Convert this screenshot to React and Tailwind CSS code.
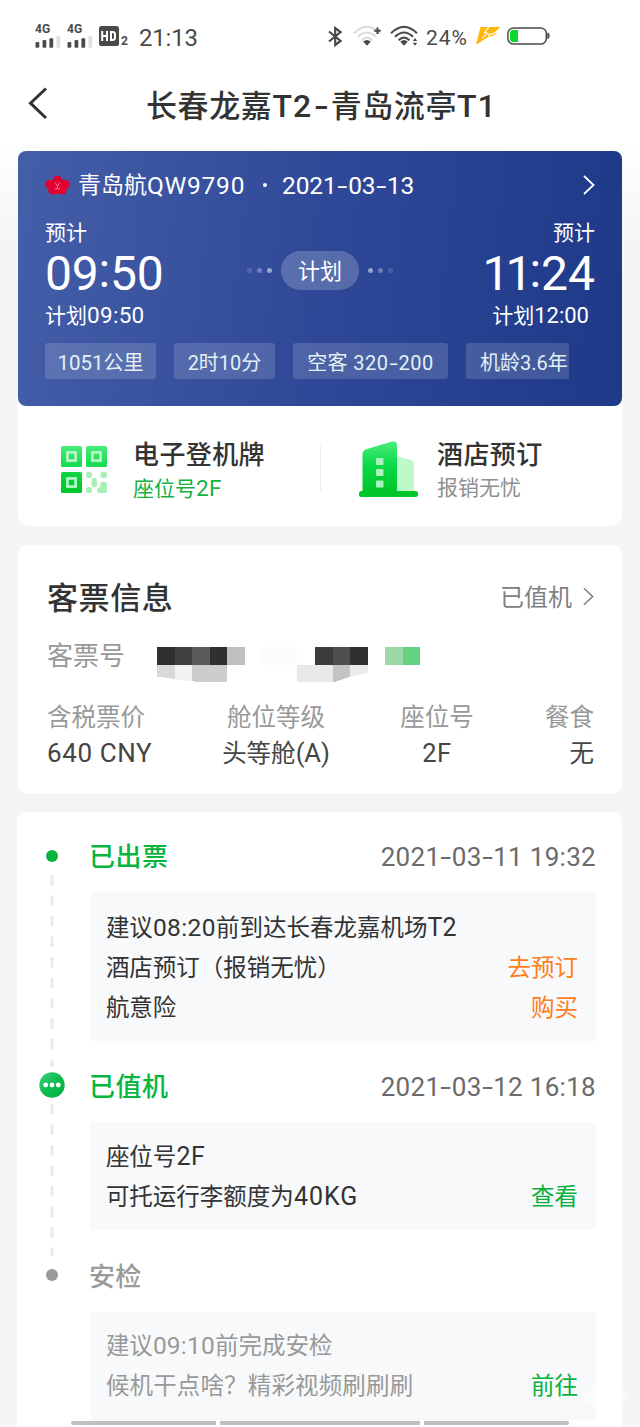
import React from "react";

const Chevron = ({ className, width = 2 }) => (
  <svg className={className} viewBox="0 0 12 20" fill="none" stroke="currentColor" strokeWidth={width}>
    <path d="M1 1 L10.5 10 L1 19" />
  </svg>
);

const Signal = () => (
  <div className="flex w-[26px] flex-col">
    <span className="h-[10px] text-[12px] leading-[9px] font-bold text-[#4a4a4a]">4G</span>
    <svg className="mt-px h-[12px] w-[26px]" viewBox="0 0 26 12" fill="#4a4a4a">
      <rect x="0.5" y="6" width="3.8" height="5.8" rx="1" />
      <rect x="7.5" y="4" width="3.8" height="7.8" rx="1" />
      <rect x="14.4" y="2.2" width="3.8" height="9.6" rx="1" />
      <rect x="21.4" y="0" width="3.8" height="11.8" rx="1" fill="#e0e0e0" />
    </svg>
  </div>
);

const Wifi = ({ faint, children }) => (
  <svg className="h-[22px] w-[30px] shrink-0" viewBox="0 0 30 22" fill="none" strokeWidth="2.1">
    <g stroke={faint ? "#dcdcdc" : "#4a4a4a"}>
      <path d="M1 8.2 Q14 -4.4 27 8.2" />
      <path d="M5 11.8 Q14 3.2 23 11.8" />
      <path d="M8.6 15.2 Q14 10 19.4 15.2" />
    </g>
    <path d="M10.2 16.6 Q14 13.4 17.8 16.6 L14.8 20 Q14 20.8 13.2 20 Z" fill="#4a4a4a" />
    {children}
  </svg>
);

const StatusBar = () => (
  <div className="flex h-[72px] items-center pl-[35px] text-[#4a4a4a]">
    <div className="flex items-center gap-[6px]">
      <Signal />
      <Signal />
    </div>
    <svg className="ml-[6px] h-[20px] w-[20px] shrink-0" viewBox="0 0 20 20">
      <rect x="0" y="0" width="20" height="20" rx="2.6" fill="#4a4a4a" />
      <path d="M3.2 5 V15 M8 5 V15 M3.2 10 H8" stroke="#fff" strokeWidth="2" fill="none" />
      <path d="M12 6 H13.6 Q16 6 16 8.4 V11.6 Q16 14 13.6 14 H12 Z" stroke="#fff" strokeWidth="2" fill="none" />
    </svg>
    <span className="ml-[2px] w-[8px] pt-[10px] text-[12px] leading-[12px] font-bold">2</span>
    <span className="ml-[10px] w-[60px] pt-[3px] text-[24px] leading-[30px] tracking-[-0.2px]">21:13</span>
    <svg className="ml-[129px] h-[21px] w-[15px] shrink-0" viewBox="0 0 15 21" fill="none" stroke="#4a4a4a" strokeWidth="2.2">
      <path d="M1 5.5 L12.6 15 L7.2 19 V2 L12.6 6 L1 15.5" />
    </svg>
    <div className="ml-[10px] flex gap-[7px]">
      <Wifi faint>
        <path d="M24.5 2.4 V9 M21.2 5.7 H27.8" stroke="#4a4a4a" />
      </Wifi>
      <Wifi>
        <path d="M22.8 16 L25 13 L27.2 16 Z M22.8 17.8 L25 20.8 L27.2 17.8 Z" fill="#4a4a4a" />
      </Wifi>
    </div>
    <span className="ml-[6px] w-[45px] pt-[3px] text-[21px] leading-[30px] tracking-[0.9px]">24%</span>
    <svg className="ml-[5px] h-[18px] w-[25px]" viewBox="0 0 25 18">
      <path d="M4.5 0 H24.5 L17.5 6.2 H21.5 L0 17.6 Z" fill="#ffb60a" />
      <path d="M13 0 L8.5 5.6 L11.5 6.2 L6 11.2 M18.5 6.4 L12.5 7.6 L14 9.4 L5 15" stroke="#fff" strokeWidth="1.1" fill="none" />
    </svg>
    <svg className="ml-[6px] h-[18px] w-[43px]" viewBox="0 0 43 18">
      <rect x="0.9" y="0.9" width="38.4" height="16.2" rx="5.6" fill="none" stroke="#4a4a4a" strokeWidth="1.5" />
      <path d="M6 3 H11 V15 H6 Q3 15 3 12 V6 Q3 3 6 3 Z" fill="#0ed62c" />
      <path d="M40.3 5.6 Q42.6 6 42.6 9 Q42.6 12 40.3 12.4 Z" fill="#4a4a4a" />
    </svg>
  </div>
);

const Header = () => (
  <div className="flex h-[79px] items-start pl-[28px]">
    <svg className="mt-[15px] h-[33px] w-[20px] shrink-0" viewBox="0 0 20 33" fill="none" stroke="#333" strokeWidth="3">
      <path d="M18 1.5 L2.5 16.2 L18 31" />
    </svg>
    <h1 className="ml-[98px] pt-[11px] text-[31px] leading-[47px] font-medium whitespace-nowrap text-[#333]">
      <span className="tracking-[0.6px]">长春龙嘉</span>
      <span className="text-[32px] tracking-[1px]">T2</span>
      <span className="mx-[4px] inline-block scale-x-140">-</span>
      <span className="tracking-[0.6px]">青岛流亭</span>
      <span className="text-[32px] tracking-[1px]">T1</span>
    </h1>
  </div>
);

/* Dates are set with wide hyphens between their parts. */
const DateText = ({ value, className = "tracking-[0.2px]", dash = "mx-[2px]" }) => (
  <span className={className}>
    {value.split("-").map((part, i) => (
      <React.Fragment key={i}>
        {i > 0 && <span className={`inline-block scale-x-150 ${dash}`}>-</span>}
        {part}
      </React.Fragment>
    ))}
  </span>
);

const Airline = () => (
  <svg className="h-[21px] w-[25px]" viewBox="0 0 25 21">
    <g fill="#e4002f">
      <ellipse cx="12.5" cy="6" rx="4.8" ry="5.6" />
      <ellipse cx="5.8" cy="9.4" rx="5.6" ry="4.6" />
      <ellipse cx="19.2" cy="9.4" rx="5.6" ry="4.6" />
      <ellipse cx="8.4" cy="15" rx="5.2" ry="4.6" />
      <ellipse cx="16.6" cy="15" rx="5.2" ry="4.6" />
      <ellipse cx="12.5" cy="12.5" rx="6" ry="5" />
    </g>
    <path d="M10 7.5 L12.5 11 L15 7.5 M12.5 10 V13.4 M10 13.8 H15" stroke="#ee7d91" strokeWidth="1" fill="none" />
  </svg>
);

const FlightCard = () => (
  <section className="h-[255px] rounded-lg bg-linear-[97deg,#445ea8,#2e4897_52%,#1e3987] px-[27px] text-white">
    <div className="flex h-[68px] items-center">
      <Airline />
      <span className="ml-[8px] flex w-[168px] pt-[1px] text-[23px] leading-[35px] whitespace-nowrap">
        青岛航<span className="text-[24.5px] tracking-[0.8px]">QW9790</span>
      </span>
      <span className="ml-[17px] size-[4px] rounded-full bg-white" />
      <DateText value="2021-03-13" className="ml-[15px] pt-[1px] text-[24.5px] leading-[34px] tracking-[-0.1px]" dash="mx-[2.4px]" />
      <Chevron className="ml-auto h-[20px] w-[12px]" width={1.8} />
    </div>
    <div className="flex items-center justify-between">
      <div className="w-[130px]">
        <div className="h-[28px] text-[21px] leading-[29px]">预计</div>
        <div className="h-[52px] text-[48px] leading-[53px] tracking-[-0.2px]">09<span className="relative -top-[3px]">:</span>50</div>
        <div className="h-[30px] text-[21px] leading-[33px] whitespace-nowrap">计划<span className="text-[22.5px] tracking-[0.3px]">09:50</span></div>
      </div>
      <div className="mb-[8px] flex items-center gap-[12px]">
        <div className="flex gap-[5px]">
          <i className="size-[5px] rounded-full bg-white/15" />
          <i className="size-[5px] rounded-full bg-white/30" />
          <i className="size-[5px] rounded-full bg-white/50" />
        </div>
        <div className="-mx-[3px] h-[39px] w-[78px] rounded-full bg-white/20 text-center text-[22px] leading-[41px]">计划</div>
        <div className="flex gap-[5px]">
          <i className="size-[5px] rounded-full bg-white/50" />
          <i className="size-[5px] rounded-full bg-white/30" />
          <i className="size-[5px] rounded-full bg-white/15" />
        </div>
      </div>
      <div className="w-[130px] text-right">
        <div className="h-[28px] text-[21px] leading-[29px]">预计</div>
        <div className="h-[52px] text-[48px] leading-[53px]"><span className="tracking-[-4px]">1</span><span className="tracking-[-3px]">1</span><span className="relative -top-[3px]">:</span>24</div>
        <div className="h-[30px] pr-[6px] text-[21px] leading-[33px] whitespace-nowrap">计划<span className="text-[22px]">12:00</span></div>
      </div>
    </div>
    <div className="mt-[14px] flex w-[524px] gap-[18px] overflow-hidden text-center text-[20px] leading-[40px] whitespace-nowrap text-[#e3f0f4]">
      <div className="h-[36px] w-[111px] shrink-0 rounded-[3px] bg-white/15"><span className="text-[20.5px]">1051</span>公里</div>
      <div className="h-[36px] w-[101px] shrink-0 rounded-[3px] bg-white/15">2时10分</div>
      <div className="h-[36px] w-[155px] shrink-0 rounded-[3px] bg-white/15 tracking-[0.4px]">空客 <DateText value="320-200" className="tracking-[0.5px]" dash="mx-[2px]" /></div>
      <div className="h-[36px] w-[118px] shrink-0 rounded-[3px] bg-white/15 pl-[14px] text-left">机龄3.6年</div>
    </div>
  </section>
);

const QrIcon = () => (
  <svg className="h-[47px] w-[46px]" viewBox="0 0 46 47">
    <defs>
      <linearGradient id="qr" x1="0" y1="0" x2="0" y2="47" gradientUnits="userSpaceOnUse">
        <stop stopColor="#45ec78" /><stop offset="0.5" stopColor="#10d84a" /><stop offset="1" stopColor="#00c42b" />
      </linearGradient>
    </defs>
    {[[0, 0], [25, 0], [0, 26]].map(([x, y]) => (
      <g key={x + "-" + y}>
        <rect x={x} y={y} width="21" height="21" rx="1.5" fill="url(#qr)" />
        <rect x={x + 6.4} y={y + 6.4} width="8.2" height="8.2" fill="none" stroke="#b9f8c8" strokeWidth="2.6" />
      </g>
    ))}
    <g fill="#a8f0b8">
      <rect x="25" y="26" width="6" height="6" rx="2" />
      <rect x="39.5" y="26" width="6.5" height="6" rx="2" />
      <rect x="30.5" y="32" width="5.5" height="9" rx="2" />
      <rect x="25" y="41" width="6" height="6" rx="2" />
      <path d="M40 36 H44 Q46 36 46 38 V45 Q46 47 44 47 H38 Q36 47 36 44.5 Q36 41 39.5 41 V37 Z" />
    </g>
  </svg>
);

const HotelIcon = () => (
  <svg className="h-[56px] w-[59px]" viewBox="0 0 59 56">
    <defs>
      <linearGradient id="ht" x1="0" y1="0" x2="0" y2="1">
        <stop stopColor="#49ee7b" /><stop offset="0.5" stopColor="#08d847" /><stop offset="1" stopColor="#00c428" />
      </linearGradient>
    </defs>
    <path d="M37 15 L52 19 Q55 20 55 23 V51 H37 Z" fill="#bdf9cb" />
    <path d="M3.5 51 V13 Q3.5 9.5 6.5 8.4 L33 0.6 Q38 -0.4 38 4 V51 Z" fill="url(#ht)" />
    <rect x="0" y="50" width="59" height="6" rx="2.5" fill="#00c428" />
    <g fill="#aaf3bc">
      <rect x="17" y="17" width="7.5" height="7" rx="1" />
      <rect x="17" y="28" width="7.5" height="7" rx="1" />
      <rect x="17" y="39.5" width="7.5" height="7" rx="1" />
    </g>
  </svg>
);

const QuickActions = () => (
  <section className="flex h-[120px] items-start rounded-b-[10px] bg-white pl-[43px]">
    <div className="mt-[40px] w-[72px]"><QrIcon /></div>
    <div className="w-[187px] pt-[28px] whitespace-nowrap">
      <div className="h-[38px] text-[26px] leading-[43px] font-medium tracking-[0.4px] text-[#333]">电子登机牌</div>
      <div className="text-[21px] leading-[33px] text-[#12b244]">座位号<span className="text-[22.5px] tracking-[0.4px]">2F</span></div>
    </div>
    <div className="mt-[40px] h-[45px] w-px bg-[#ececec]" />
    <div className="mt-[35px] ml-[38px] w-[78px]"><HotelIcon /></div>
    <div className="pt-[28px] whitespace-nowrap">
      <div className="h-[38px] text-[26px] leading-[43px] font-medium tracking-[0.4px] text-[#333]">酒店预订</div>
      <div className="text-[21px] leading-[33px] text-[#8f8f8f]">报销无忧</div>
    </div>
  </section>
);

const DARK = ["#303030", "#414141", "#5b5b5b", "#303030", "#bfbfbf"];

const Redaction = () => (
  <svg className="h-[35px] w-[264px]" viewBox="0 0 264 35" shapeRendering="crispEdges">
    {DARK.map((c, i) => (
      <rect key={i} x={i * 17.6} y="0" width="17.6" height="18" fill={c} />
    ))}
    <path d="M0 18 H17.6 V32 L0 29.5 Z" fill="#d9d9d9" />
    <path d="M17.6 18 H35 V34.5 L17.6 32 Z" fill="#f2f2f2" />
    <path d="M35 18 H70 V35 H41 L35 34.3 Z" fill="#cdcdcd" />
    <rect x="105" y="0" width="35" height="18" fill="#fcfcfc" />
    <rect x="158" y="0" width="17.5" height="18" fill="#3c3c3c" />
    <rect x="175.5" y="0" width="17.5" height="18" fill="#4e4e4e" />
    <rect x="193" y="0" width="17.5" height="18" fill="#303030" />
    <rect x="140" y="18" width="35.5" height="17" fill="#e9e9e9" />
    <path d="M175.5 18 H193 V30 L177 35 H175.5 Z" fill="#c4c4c4" />
    <path d="M193 18 H210.5 V26 L193 30 Z" fill="#ebebeb" />
    <rect x="228" y="0" width="17.5" height="18" fill="#9dd8aa" />
    <rect x="245.5" y="0" width="17.5" height="18" fill="#65d281" />
  </svg>
);

const TicketInfo = () => (
  <section className="mt-[19px] h-[249px] rounded-[9px] bg-white pr-[28px] pl-[29px] whitespace-nowrap">
    <div className="flex h-[88px] items-end justify-between">
      <h2 className="text-[31px] leading-[68px] font-medium tracking-[0.6px] text-[#333]">客票信息</h2>
      <div className="flex items-center text-[24px] leading-[70px] text-[#808080]">
        已值机
        <Chevron className="mb-[3px] ml-[11px] h-[19px] w-[11px]" width={1.7} />
      </div>
    </div>
    <div className="flex h-[67px] text-[26px] leading-[47px] text-[#999]">
      <span className="w-[110px]">客票号</span>
      <div className="pt-[14px]"><Redaction /></div>
    </div>
    <div className="flex text-[24.5px] leading-[36px] text-[#444]">
      <div className="w-[120px]"><div className="text-[#999]">含税票价</div><div className="text-[26px] leading-[35px] tracking-[0.6px]">640 CNY</div></div>
      <div className="ml-[54px] w-[110px] text-center"><div className="text-[#999]">舱位等级</div><div className="leading-[35px]">头等舱<span className="text-[25.5px]">(A)</span></div></div>
      <div className="ml-[68px] w-[76px] text-center"><div className="text-[#999]">座位号</div><div className="text-[25.5px] leading-[35px] tracking-[0.6px]">2F</div></div>
      <div className="ml-auto text-right"><div className="text-[#999]">餐食</div><div>无</div></div>
    </div>
  </section>
);

const Dashes = ({ className, height }) => (
  <svg className={className} width="4" height={height} viewBox={`0 0 4 ${height}`}>
    <line x1="2" y1="0" x2="2" y2={height} stroke="#ebebeb" strokeWidth="3" strokeDasharray="10.4 10.1" />
  </svg>
);

const Line = ({ children, action, color = "text-[#08b03c]" }) => (
  <div className="flex h-[40.4px] items-center justify-between leading-[41px]">
    <span>{children}</span>
    {action && <span className={color}>{action}</span>}
  </div>
);

const Timeline = () => (
  <section className="mt-[18px] -ml-px h-[615px] rounded-t-[9px] bg-white pr-[26px] whitespace-nowrap">
    <div className="flex h-[229px]">
      <div className="flex w-[73px] flex-col items-center pt-[38px] pr-[3px]">
        <i className="size-[12px] shrink-0 rounded-full bg-[#08b53f]" />
        <Dashes className="mt-[13px] shrink-0" height={192} />
      </div>
      <div className="w-[507px]">
        <div className="flex h-[80px] items-center justify-between pt-[11px]">
          <h3 className="-ml-px text-[26px] font-medium tracking-[0.6px] text-[#08b53f]">已出票</h3>
          <DateText value="2021-03-11 19:32" className="text-[26px] tracking-[0.3px] text-[#6b6b6b]" />
        </div>
        <div className="h-[149px] bg-[#f7f9fb] pt-[15.5px] pr-[18px] pl-[16px] text-[23.5px] text-[#333]">
          <Line>建议<span className="text-[24.5px] tracking-[0.4px]">08:20</span>前到达长春龙嘉机场<span className="text-[25px] tracking-[0.3px]">T2</span></Line>
          <Line action="去预订" color="text-[#ff7d1a]">酒店预订（报销无忧）</Line>
          <Line action="购买" color="text-[#ff7d1a]">航意险</Line>
        </div>
      </div>
    </div>
    <div className="flex h-[190px]">
      <div className="flex w-[73px] flex-col items-center pt-[31px] pr-[3px]">
        <svg className="size-[26px] shrink-0" viewBox="0 0 26 26">
          <defs><linearGradient id="dot" x1="0" y1="0" x2="1" y2="1"><stop stopColor="#3fcf78" /><stop offset="0.5" stopColor="#0dbd50" /><stop offset="1" stopColor="#00ae3c" /></linearGradient></defs>
          <circle cx="13" cy="13" r="12.7" fill="url(#dot)" />
          <g fill="#fff"><circle cx="6.7" cy="13" r="2.4" /><circle cx="13" cy="13" r="2.4" /><circle cx="19.3" cy="13" r="2.4" /></g>
        </svg>
        <Dashes className="mt-[6px] shrink-0" height={152} />
      </div>
      <div className="w-[507px]">
        <div className="flex h-[81px] items-center justify-between pt-[11px]">
          <h3 className="-ml-px text-[26px] font-medium tracking-[0.6px] text-[#08b53f]">已值机</h3>
          <DateText value="2021-03-12 16:18" className="text-[26px] tracking-[0.3px] text-[#6b6b6b]" />
        </div>
        <div className="h-[108px] bg-[#f7f9fb] pt-[14.5px] pr-[18px] pl-[16px] text-[23.5px] text-[#333]">
          <Line>座位号<span className="text-[25px] tracking-[0.6px]">2F</span></Line>
          <Line action="查看">可托运行李额度为<span className="text-[25px] tracking-[1px]">40KG</span></Line>
        </div>
      </div>
    </div>
    <div className="flex h-[196px]">
      <div className="flex w-[73px] flex-col items-center pt-[38px] pr-[3px]">
        <i className="size-[12px] rounded-full bg-[#999]" />
      </div>
      <div className="w-[507px]">
        <div className="flex h-[81px] items-center pt-[11px]">
          <h3 className="-ml-px text-[26px] font-medium tracking-[0.3px] text-[#999]">安检</h3>
        </div>
        <div className="h-[108px] bg-[#f7f9fb] pt-[14px] pr-[18px] pl-[16px] text-[23.5px] text-[#999]">
          <Line>建议<span className="text-[24.5px] tracking-[0.2px]">09:10</span>前完成安检</Line>
          <Line action="前往"><span className="tracking-[0.15px]">候机干点啥？精彩视频刷刷刷</span></Line>
        </div>
      </div>
    </div>
  </section>
);

export default function App() {
  return (
    <main className="relative h-[1427px] w-[640px] overflow-hidden bg-[#f3f5f7] bg-linear-[180deg,#ffffff_140px,#f3f5f7_240px] font-['Roboto','Noto_Sans_CJK_SC',sans-serif]">
      <StatusBar />
      <Header />
      <div className="px-[18px]">
        <div className="rounded-[10px] bg-white">
          <FlightCard />
          <QuickActions />
        </div>
        <TicketInfo />
        <Timeline />
      </div>
      <svg className="absolute right-[8px] bottom-[14px] h-[34px] w-[54px] opacity-50" viewBox="0 0 54 34" fill="#fff">
        <path d="M2 17 L14 7 L22 10 L30 3 L42 8 L52 18 L40 29 L30 25 L16 29 Z" />
      </svg>
      <div className="absolute bottom-[2px] left-[71px] flex gap-[4px]">
        <div className="h-[4px] w-[145px] rounded-l-full bg-[#c0c0c0]" />
        <div className="h-[4px] w-[200px] bg-[#c0c0c0]" />
        <div className="h-[4px] w-[145px] rounded-r-full bg-[#c0c0c0]" />
      </div>
    </main>
  );
}
